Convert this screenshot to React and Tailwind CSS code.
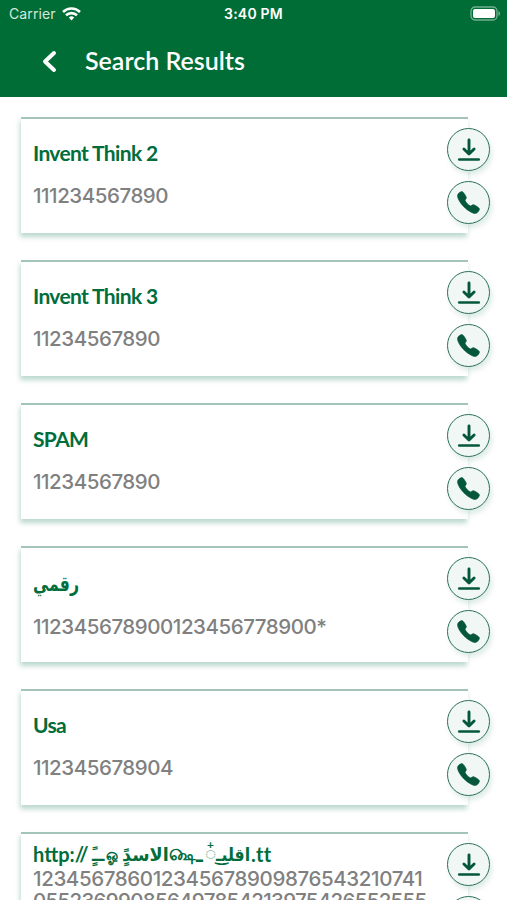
import { clsx } from 'clsx';
import { IoCall } from 'react-icons/io5';

const contacts = [
  { name: 'Invent Think 2', number: '111234567890' },
  { name: 'Invent Think 3', number: '11234567890' },
  { name: 'SPAM', number: '11234567890' },
  { name: 'رقمي', number: '112345678900123456778900*', arabic: true },
  { name: 'Usa', number: '112345678904' },
];

function WifiIcon() {
  return <svg width="19" height="14" viewBox="0 0 19 14" fill="none" stroke="white" strokeWidth="2.6">
    <path d="M1 5a12.2 12.2 0 0 1 17 0"/>
    <path d="M4 8.3a8 8 0 0 1 11 0"/>
    <path d="M6.8 10.6a4 4 0 0 1 5.4 0L9.5 13.5z" fill="white" stroke="none"/>
  </svg>;
}

function BatteryIcon() {
  return <svg width="31" height="15" viewBox="0 0 31 15">
    <rect x="1" y="1" width="26" height="13" rx="4" fill="none" stroke="white" strokeOpacity="0.45" strokeWidth="1.3"/>
    <rect x="3" y="3" width="22" height="9" rx="2" fill="white"/>
    <path d="M28.5 5v5c2-1 2-4 0-5z" fill="white" fillOpacity="0.5"/>
  </svg>;
}

function RoundButton({ label, children }) {
  return <button aria-label={label} className="flex h-[43px] w-[43px] items-center justify-center rounded-full border-[1.5px] border-[#2b715a] bg-[#f1f7f4] text-[#04573a] shadow-[2px_4px_5px_rgba(0,110,60,0.13)]">{children}</button>;
}

function Actions() {
  return <div className="absolute -right-[22px] top-[9px] flex flex-col gap-[10px]">
    <RoundButton label="Download">
      <svg width="24" height="24" viewBox="0 0 24 24" fill="none" stroke="currentColor" strokeWidth="2.9" strokeLinecap="round" strokeLinejoin="round">
        <path d="M12 2v13.5M6.9 11l5.1 5 5.1-5"/><path d="M2.2 21.5h19.6" strokeWidth="2.5"/>
      </svg>
    </RoundButton>
    <RoundButton label="Call"><IoCall size={25} stroke="currentColor" strokeWidth={14} /></RoundButton>
  </div>;
}

function Card({ className, children }) {
  return <div className={clsx('relative ml-[21px] w-[447px] border-t-2 border-[#a3c4b8] bg-white shadow-[-1px_4px_5px_rgba(0,110,70,0.27)]', className)}>
    {children}
    <Actions />
  </div>;
}

export default function App() {
  return <div className="h-[900px] w-[507px] overflow-hidden bg-white">
    <header className="h-[97px] bg-[#006d37] text-white">
      <div className="flex h-[27px] items-center justify-between pl-[9px] pr-[6px] font-['Inter','Liberation_Sans',sans-serif] text-[14px]">
        <div className="flex w-[160px] items-center gap-[6px] text-[#d4e9dd]"><span className="tracking-[0.1px]">Carrier</span><WifiIcon /></div>
        <span className="mr-[3px] text-[14px] font-semibold tracking-[0.2px]">3:40 PM</span>
        <div className="flex w-[160px] justify-end"><BatteryIcon /></div>
      </div>
      <div className="flex h-[68px] items-center pl-[41px]">
        <svg width="16" height="24" viewBox="0 0 16 24" fill="none" stroke="white" strokeWidth="4" strokeLinecap="round" strokeLinejoin="round"><path d="M13 4 4 12.5l9 8.5"/></svg>
        <h1 className="ml-[28px] whitespace-nowrap font-['Lato',sans-serif] text-[25px] font-semibold">Search Results</h1>
      </div>
    </header>
    <main className="flex flex-col gap-[27px] pt-[20px]">
      {contacts.map((c) => <Card key={c.name} className="h-[116px] pl-[12px]">
        <h2 className={clsx('mt-[19px] w-max whitespace-nowrap leading-[30px] text-[#006d3b]', c.arabic ? "origin-left translate-y-[2px] scale-x-[0.79] font-['DejaVu_Sans',sans-serif] text-[20px] font-bold" : "font-['Lato',sans-serif] text-[21px] font-bold tracking-[-0.65px]")}>{c.name}</h2>
        <p className={clsx("whitespace-nowrap font-['Inter',sans-serif] text-[20.5px] font-medium leading-[30px] tracking-[-0.45px] text-[#808080]", c.arabic ? 'mt-[15px]' : 'mt-[13px]')}>{c.number}</p>
      </Card>)}
      <Card className="h-[150px] shrink-0 pl-[12px]">
        <h2 dir="ltr" className="flex whitespace-nowrap pt-[6px] font-['Lato','DejaVu_Sans',sans-serif] text-[20px] font-bold leading-[28px] text-[#006d3b]">
          <span className="w-[59px]">http://</span>
          <span className="w-[14px] text-[18px]">ــًٍ</span>
          <span className="w-[16px] text-[18px]"><span className="inline-block origin-left scale-x-[0.8]">ஓ</span></span>
          <span className="w-[47px] text-[18px]"><span className="inline-block origin-left scale-x-[0.98]">الاسدًٍ</span></span>
          <span className="w-[27px] text-[17px]">௸</span>
          <span className="w-[9px] text-[20px]">ـ</span>
          <span className="relative w-[11px] text-[17px] text-[#7fb59b]">◌<span className="absolute -top-[9px] left-[2px] text-[12px] text-[#006d3b]">+</span></span>
          <span className="w-[35px] text-[18px]"><span className="inline-block origin-left scale-x-[0.88]">اقلي͜ـ</span></span>
          <span className="tracking-[0.3px]">.tt</span>
        </h2>
        <p className="whitespace-nowrap font-['Inter',sans-serif] text-[20.5px] font-medium leading-[22px] tracking-[-0.38px] text-[#808080]">123456786012345678909876543210741<br/><span className="tracking-[-0.7px]">055236990856497854213975426552555</span></p>
      </Card>
    </main>
  </div>;
}
